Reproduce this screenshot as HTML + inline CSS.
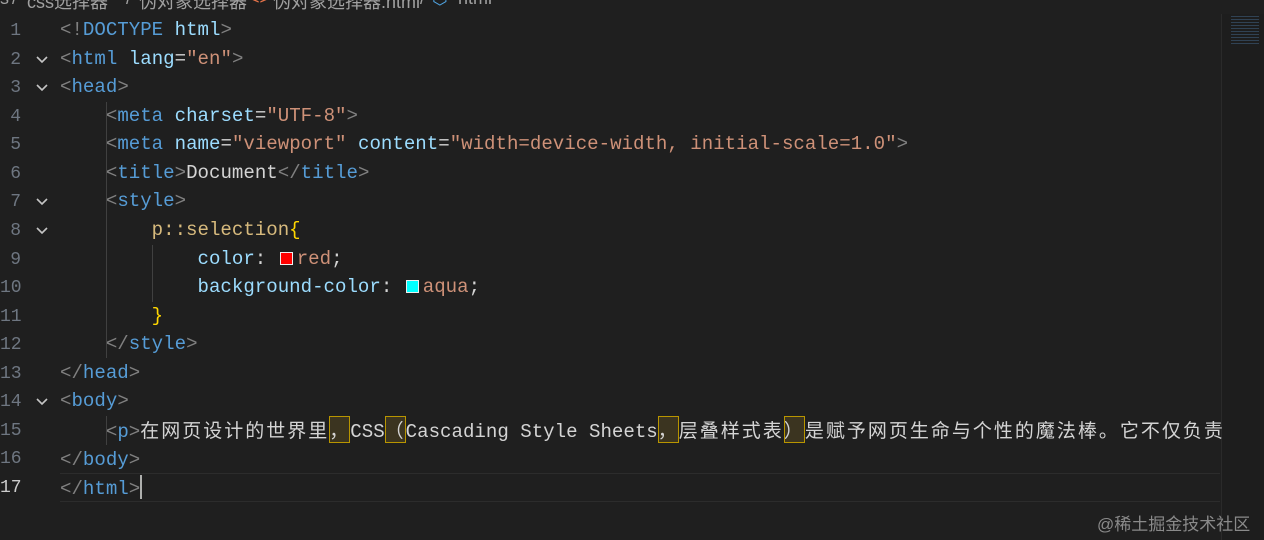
<!DOCTYPE html>
<html><head><meta charset="utf-8"><style>
body{margin:0;width:1264px;height:540px;background:#1f1f1f;overflow:hidden;position:relative;font-family:"Liberation Mono","Noto Sans CJK SC",monospace;}
.bc span{position:absolute;top:-12px;font-family:"Liberation Sans","Noto Sans CJK SC",sans-serif;font-size:18px;color:#a0a0a0;white-space:nowrap}
.lns{position:absolute;left:0;top:17px;width:21px;text-align:right;font-size:18px;color:#6e7681;font-family:"Liberation Mono",monospace;line-height:28.56px;white-space:pre}
.a{color:#cccccc}
.fold{position:absolute;left:34px;width:16px;height:16px}
.code{position:absolute;left:60px;top:16px;font-size:19.1px;color:#d4d4d4;white-space:pre;line-height:28.56px}
.b{color:#808080}.t{color:#569cd6}.at{color:#9cdcfe}.s{color:#ce9178}.sel{color:#d7ba7d}.y{color:#ffd700}
.cj{font-family:"Noto Sans CJK SC",sans-serif;font-size:19px;letter-spacing:2px}
.hl{background:#3b3420;outline:1px solid #b89500;outline-offset:-1px}
.sw{display:inline-block;width:11px;height:11px;border:1px solid #eee;margin:0 4px 0 2px;vertical-align:-1px}
.guide{position:absolute;width:1px;background:#404040}
</style></head><body>
<div class="bc">
<span style="left:0">s</span><span style="left:12px">/</span>
<span style="left:27px">css选择器</span><span style="left:126px">/</span>
<span style="left:139px">伪对象选择器</span><span style="left:236px">/</span>
<span style="left:249px;color:#e8744a">&lt;&gt;</span>
<span style="left:273px">伪对象选择器.html</span><span style="left:420px">/</span>
<span style="left:432px;color:#4fa3e0">⬡</span><span style="left:458px">html</span>
</div>

<div style="position:absolute;left:60px;top:473px;width:1160px;height:27px;border-top:1px solid #2c2c2c;border-bottom:1px solid #2c2c2c"></div>
<div style="position:absolute;left:1221px;top:14px;width:43px;height:526px;background:#1d1d1d;border-left:1px solid #2a2a2a"></div>
<div style="position:absolute;left:1231px;top:16px;width:28px;height:30px;background:repeating-linear-gradient(#3d5a78 0 1px,transparent 1px 3px);opacity:.6"></div>

<div class="guide" style="left:106px;top:102px;height:256px"></div>
<div class="guide" style="left:152px;top:245px;height:57px"></div>
<div class="guide" style="left:106px;top:416px;height:29px"></div>

<div class="lns">1
2
3
4
5
6
7
8
9
10
11
12
13
14
15
16
<span class="a">17</span></div>

<svg class="fold" style="top:52px" viewBox="0 0 16 16"><path d="M3 5l5 5 5-5" fill="none" stroke="#c5c5c5" stroke-width="1.6"/></svg>
<svg class="fold" style="top:80px" viewBox="0 0 16 16"><path d="M3 5l5 5 5-5" fill="none" stroke="#c5c5c5" stroke-width="1.6"/></svg>
<svg class="fold" style="top:194px" viewBox="0 0 16 16"><path d="M3 5l5 5 5-5" fill="none" stroke="#c5c5c5" stroke-width="1.6"/></svg>
<svg class="fold" style="top:223px" viewBox="0 0 16 16"><path d="M3 5l5 5 5-5" fill="none" stroke="#c5c5c5" stroke-width="1.6"/></svg>
<svg class="fold" style="top:394px" viewBox="0 0 16 16"><path d="M3 5l5 5 5-5" fill="none" stroke="#c5c5c5" stroke-width="1.6"/></svg>

<div class="code"><span class="b">&lt;!</span><span class="t">DOCTYPE</span> <span class="at">html</span><span class="b">&gt;</span>
<span class="b">&lt;</span><span class="t">html</span> <span class="at">lang</span>=<span class="s">"en"</span><span class="b">&gt;</span>
<span class="b">&lt;</span><span class="t">head</span><span class="b">&gt;</span>
    <span class="b">&lt;</span><span class="t">meta</span> <span class="at">charset</span>=<span class="s">"UTF-8"</span><span class="b">&gt;</span>
    <span class="b">&lt;</span><span class="t">meta</span> <span class="at">name</span>=<span class="s">"viewport"</span> <span class="at">content</span>=<span class="s">"width=device-width, initial-scale=1.0"</span><span class="b">&gt;</span>
    <span class="b">&lt;</span><span class="t">title</span><span class="b">&gt;</span>Document<span class="b">&lt;/</span><span class="t">title</span><span class="b">&gt;</span>
    <span class="b">&lt;</span><span class="t">style</span><span class="b">&gt;</span>
        <span class="sel">p::selection</span><span class="y">{</span>
            <span class="at">color</span>: <span class="sw" style="background:red"></span><span class="s">red</span>;
            <span class="at">background-color</span>: <span class="sw" style="background:aqua"></span><span class="s">aqua</span>;
        <span class="y">}</span>
    <span class="b">&lt;/</span><span class="t">style</span><span class="b">&gt;</span>
<span class="b">&lt;/</span><span class="t">head</span><span class="b">&gt;</span>
<span class="b">&lt;</span><span class="t">body</span><span class="b">&gt;</span>
    <span class="b">&lt;</span><span class="t">p</span><span class="b">&gt;</span><span class="cj">在网页设计的世界里<span class="hl">，</span></span>CSS<span class="cj"><span class="hl">（</span></span>Cascading Style Sheets<span class="cj"><span class="hl">，</span>层叠样式表<span class="hl">）</span>是赋予网页生命与个性的魔法棒。它不仅负责</span>
<span class="b">&lt;/</span><span class="t">body</span><span class="b">&gt;</span>
<span class="b">&lt;/</span><span class="t">html</span><span class="b">&gt;</span><span style="display:inline-block;width:2px;height:24px;background:#aeafad;vertical-align:-5px"></span></div>

<div style="position:absolute;left:1097px;top:510px;font-family:'Liberation Sans','Noto Sans CJK SC',sans-serif;font-size:17px;color:#8a8a8a">@稀土掘金技术社区</div>
</body></html>
